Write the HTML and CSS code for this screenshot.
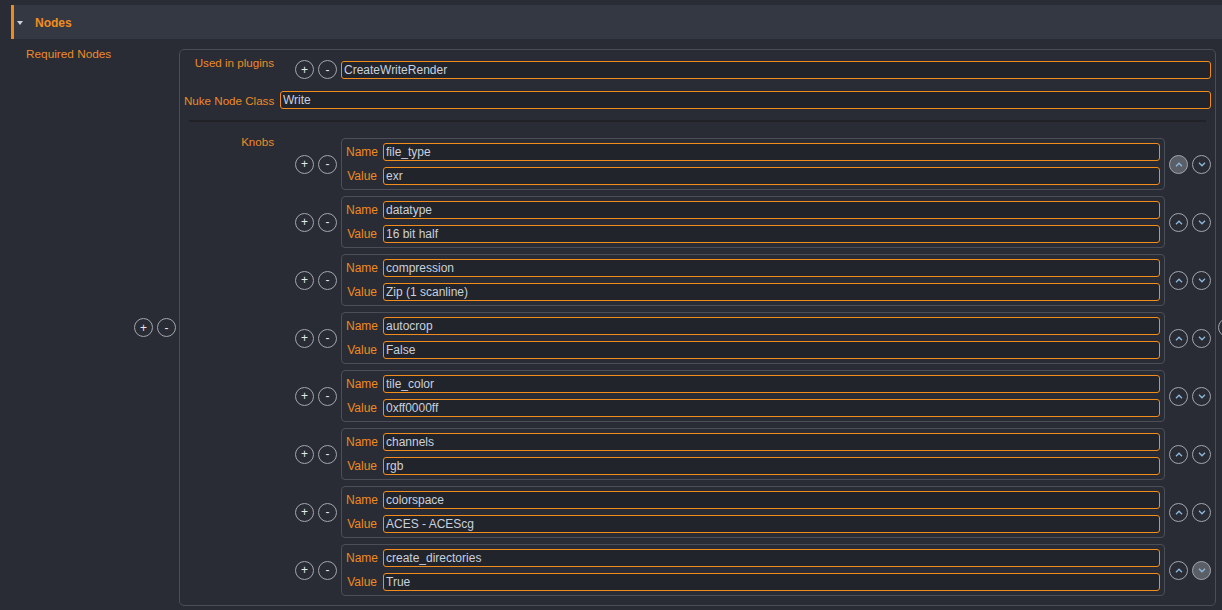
FILE: index.html
```html
<!DOCTYPE html>
<html>
<head>
<meta charset="utf-8">
<link rel="stylesheet" href="styles.css">
</head>
<body>
<div class="section-header">
  <span class="caret"></span>
  <span class="section-title">Nodes</span>
</div>
<div class="required-row">
  <div class="req-label">Required Nodes</div>
  <div class="req-btns btn-pair">
    <span class="cbtn">+</span><span class="cbtn">-</span>
  </div>
  <div class="req-box">
    <div class="form-row">
      <div class="form-label top">Used in plugins</div>
      <div class="list list-plugins">
        <div class="list-item">
          <div class="btn-pair item-btns"><span class="cbtn">+</span><span class="cbtn">-</span></div>
          <div class="field">CreateWriteRender</div>
        </div>
      </div>
    </div>
    <div class="form-row row-class">
      <div class="form-label mid">Nuke Node Class</div>
      <div class="field">Write</div>
    </div>
    <div class="separator"></div>
    <div class="form-row row-knobs">
      <div class="form-label top">Knobs</div>
      <div class="list list-knobs" id="knobs"></div>
    </div>
  </div>
  <div class="outer-arrows btn-pair">
    <span class="cbtn arrow"><svg width="8" height="5" viewBox="0 0 8 5"><polyline points="1,4.2 4,1.2 7,4.2" /></svg></span>
    <span class="cbtn arrow"><svg width="8" height="5" viewBox="0 0 8 5"><polyline points="1,0.8 4,3.8 7,0.8" /></svg></span>
  </div>
</div>
<script src="app.js"></script>
</body>
</html>
```
FILE: app.js
```js
var knobs = [
  ["file_type", "exr"],
  ["datatype", "16 bit half"],
  ["compression", "Zip (1 scanline)"],
  ["autocrop", "False"],
  ["tile_color", "0xff0000ff"],
  ["channels", "rgb"],
  ["colorspace", "ACES - ACEScg"],
  ["create_directories", "True"]
];
var up = '<svg width="8" height="5" viewBox="0 0 8 5"><polyline points="1,4.2 4,1.2 7,4.2" /></svg>';
var down = '<svg width="8" height="5" viewBox="0 0 8 5"><polyline points="1,0.8 4,3.8 7,0.8" /></svg>';
var html = "";
knobs.forEach(function (k, i) {
  var upCls = i === 0 ? " active" : "";
  var downCls = i === knobs.length - 1 ? " active" : "";
  html += '<div class="list-item knob-item">' +
    '<div class="btn-pair item-btns"><span class="cbtn">+</span><span class="cbtn">-</span></div>' +
    '<div class="knob-group">' +
      '<div class="knob-row"><span class="knob-label">Name</span><div class="field">' + k[0] + '</div></div>' +
      '<div class="knob-row"><span class="knob-label">Value</span><div class="field">' + k[1] + '</div></div>' +
    '</div>' +
    '<div class="btn-pair item-arrows">' +
      '<span class="cbtn arrow' + upCls + '">' + up + '</span>' +
      '<span class="cbtn arrow' + downCls + '">' + down + '</span>' +
    '</div>' +
  '</div>';
});
document.getElementById("knobs").innerHTML = html;
```
FILE: styles.css
```css
* { box-sizing: border-box; }
html, body { margin: 0; }
body {
  background: #292c34;
  font-family: "Liberation Sans", Arial, sans-serif;
  font-size: 12px;
  color: #c9d1dd;
  width: 1222px;
  height: 610px;
  overflow: hidden;
  padding-top: 5px;
}
.section-header {
  margin-left: 11px;
  height: 34px;
  border-left: 3px solid #f08a1c;
  background: #343843;
  display: flex;
  align-items: center;
}
.caret {
  width: 0; height: 0;
  border-left: 3.5px solid transparent;
  border-right: 3.5px solid transparent;
  border-top: 4px solid #cdd2da;
  margin-left: 3px;
  margin-top: 1px;
}
.section-title {
  margin-left: 12px;
  margin-top: 1px;
  font-weight: bold;
  color: #f28c1e;
}
.required-row {
  display: flex;
  align-items: flex-start;
  margin-top: 5px;
}
.req-label {
  flex: none;
  width: 134px;
  padding-left: 26px;
  line-height: 14px;
  margin-top: 3px;
  font-size: 11.8px;
  color: #ec8a2a;
}
.btn-pair { display: flex; gap: 4px; flex: none; }
.req-btns {
  width: 45px;
  align-self: center;
  margin-top: 5px;
}
.cbtn {
  width: 19px; height: 19px;
  border: 1.5px solid #a2a6ad;
  border-radius: 50%;
  display: flex;
  align-items: center;
  justify-content: center;
  color: #e4e8ef;
  font-size: 12px;
  line-height: 1;
  flex: none;
}
.cbtn.arrow svg polyline {
  fill: none;
  stroke: #8fb9de;
  stroke-width: 1.3;
}
.cbtn.active { background: #5a5e67; }
.req-box {
  flex: none;
  width: 1037px;
  margin-top: 5px;
  border: 1px solid #4a4e57;
  border-radius: 5px;
  padding: 5px 4px 9px 4px;
}
.outer-arrows {
  align-self: center;
  margin-top: 5px;
  margin-left: 2px;
}
.form-row { display: flex; align-items: flex-start; }
.form-label {
  flex: none;
  width: 90px;
  margin-right: 6px;
  text-align: right;
  font-size: 11.6px;
  color: #ec8a2a;
  white-space: nowrap;
}
.form-label.top { line-height: 14px; padding-top: 1px; }
.form-label.mid { line-height: 17px; padding-top: 1px; }
.list {
  flex: 1;
  min-width: 0;
  padding-left: 15px;
  display: flex;
  flex-direction: column;
}
.list-plugins { padding-top: 5px; }
.list-knobs { padding-top: 4px; gap: 6px; }
.list-item { display: flex; align-items: center; }
.item-btns { margin-right: 4px; }
.field {
  flex: 1;
  min-width: 0;
  height: 18px;
  border: 1px solid #f28c1c;
  border-radius: 3px;
  background: #22242b;
  padding: 1px 2px 0 2px;
  line-height: 15px;
  white-space: nowrap;
  overflow: hidden;
  color: #c9d1dd;
}
.row-class { margin-top: 12px; }
.separator {
  margin: 11px 5px 0 5px;
  height: 2px;
  background: #202228;
}
.row-knobs { margin-top: 12px; }
.knob-group {
  flex: 1;
  min-width: 0;
  border: 1px solid #4b4f58;
  border-radius: 4px;
  padding: 4px;
  display: flex;
  flex-direction: column;
  gap: 6px;
}
.knob-row { display: flex; align-items: center; }
.knob-label {
  flex: none;
  width: 31px;
  margin-right: 6px;
  text-align: right;
  color: #ef8a1f;
  line-height: 15px;
  padding-top: 1px;
}
.item-arrows { margin-left: 4px; }
```
